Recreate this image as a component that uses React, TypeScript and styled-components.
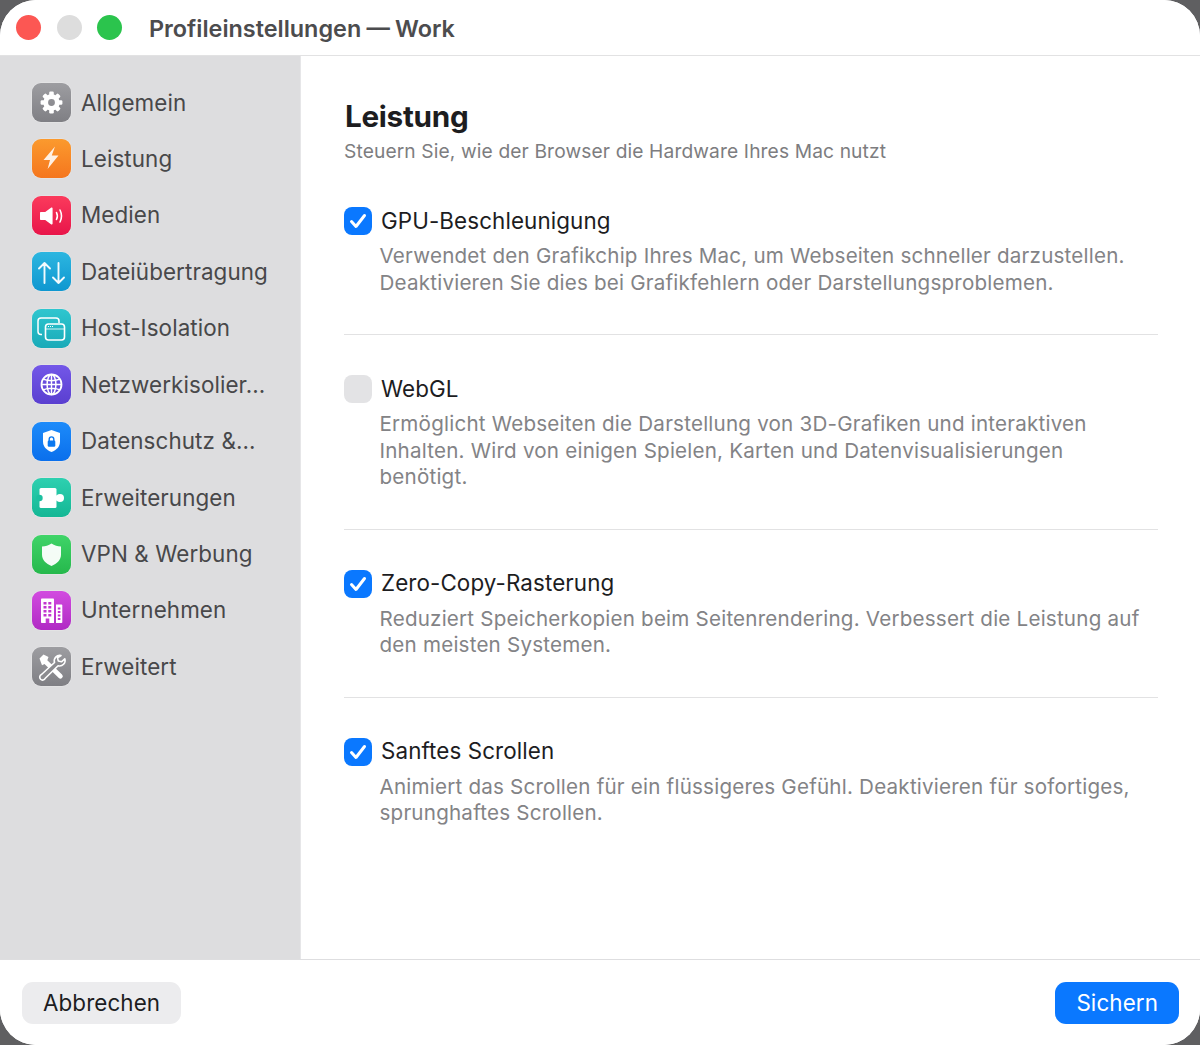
import React from 'react';
import styled, { createGlobalStyle } from 'styled-components';

const Global = createGlobalStyle`
  html, body { margin: 0; padding: 0; background: #5f5f61; }
  * { box-sizing: border-box; }
  body { font-family: Inter, "Noto Sans", "Liberation Sans", sans-serif; -webkit-font-smoothing: antialiased; }
`;

const Win = styled.div`
  width: 1200px; height: 1045px; background: #fff; border-radius: 36px; overflow: hidden;
  display: flex; flex-direction: column;
`;
const TitleBar = styled.header`
  height: 56px; flex: none; display: flex; align-items: center; padding: 0 0 0 16px;
  border-bottom: 1px solid #e2e2e3; background: #fff;
`;
const Lights = styled.div`display: flex; gap: 15.5px; margin-right: 27px;`;
const Light = styled.span<{ $c: string }>`
  width: 25px; height: 25px; border-radius: 50%; background: ${p => p.$c};
`;
const Title = styled.h1`
  margin: 2px 0 0; font-size: 23.4px; font-weight: 600; color: #4c4c4e; word-spacing: -.7px;
`;
const Body = styled.div`flex: 1; min-height: 0; display: flex;`;
const Sidebar = styled.nav`
  width: 301px; flex: none; background: #dddddf; padding: 27px 0 0 32px;
  display: flex; flex-direction: column; gap: 17.45px; border-right: 1px solid #e6e6e8;
`;
const NavItem = styled.div`display: flex; align-items: center; gap: 10px; height: 39px;`;
const IconTile = styled.div<{ $from: string; $to: string }>`
  width: 39px; height: 39px; flex: none; border-radius: 9px;
  background: linear-gradient(180deg, ${p => p.$from}, ${p => p.$to});
  display: flex; align-items: center; justify-content: center;
  box-shadow: 0 0 0 0.5px rgba(255,255,255,.35);
  svg { display: block; }
`;
const NavLabel = styled.span`
  font-size: 22.4px; color: #48484a; white-space: nowrap; letter-spacing: .1px; padding-bottom: 1px;
`;
const Main = styled.main`flex: 1; min-width: 0; padding: 41px 42px 0 43px; background: #fff;`;
const Heading = styled.h2`
  margin: 0 0 0 1px; font-size: 29.7px; line-height: 38px; font-weight: 700; color: #1d1d1f; letter-spacing: -.3px;
`;
const Sub = styled.p`
  margin: 3px 0 0; font-size: 19.2px; line-height: 26px; color: #7d7d80; letter-spacing: .12px;
`;
const Section = styled.section<{ $last?: boolean }>`
  padding-bottom: 38px;
  margin-bottom: 40px;
  border-bottom: ${p => (p.$last ? 'none' : '1px solid #e2e2e3')};
`;
const Sections = styled.div`margin-top: 43px;`;
const LabelRow = styled.label`display: flex; align-items: center; gap: 9px; height: 28px;`;
const Check = styled.span<{ $on: boolean }>`
  width: 28px; height: 28px; border-radius: 8px; flex: none;
  background: ${p => (p.$on ? '#0a78ff' : '#e3e3e5')};
  display: flex; align-items: center; justify-content: center;
`;
const Label = styled.span`font-size: 22.4px; color: #1d1d1f; letter-spacing: .1px; padding-bottom: 2px;`;
const Desc = styled.p`
  margin: 8px 8px 0 35.5px; font-size: 20.6px; line-height: 26.5px; color: #838386; letter-spacing: .21px;
`;
const Footer = styled.footer`
  height: 86px; flex: none; border-top: 1px solid #dedee0; background: #fff;
  display: flex; align-items: center; justify-content: space-between; padding: 0 21px 0 22px;
`;
const Button = styled.button<{ $primary?: boolean }>`
  height: 42px; border: none; border-radius: 11px; padding: 0 21px; font: inherit;
  font-size: 22.4px; letter-spacing: .1px;
  background: ${p => (p.$primary ? '#0a78ff' : '#ececee')};
  color: ${p => (p.$primary ? '#fff' : '#1d1d1f')};
`;

const S = ({ children }: { children: React.ReactNode }) => (
  <svg width="39" height="39" viewBox="0 0 39 39" fill="none">{children}</svg>
);

const gearTeeth = Array.from({ length: 8 }, (_, i) => i * 45);
const GearIcon = () => (
  <S>
    {gearTeeth.map(a => (
      <rect key={a} x="17.2" y="8.6" width="4.6" height="6" rx="1.2" fill="#fff" transform={`rotate(${a} 19.5 19.5)`} />
    ))}
    <circle cx="19.5" cy="19.5" r="5.8" stroke="#fff" strokeWidth="4.8" />
  </S>
);
const BoltIcon = () => (
  <S><path d="M23 7.500 11.500 21h6.500l-2.400 9L26.500 16.500h-6.700z" fill="#fff" opacity=".88" /></S>
);
const SpeakerIcon = () => (
  <S>
    <path d="M9 16h4.200l5.800-4.200c.7-.5 1.600 0 1.600.8v14.800c0 .8-.9 1.300-1.600.8L13.200 24H9c-.6 0-1-.4-1-1v-6c0-.6.4-1 1-1z" fill="#fff" />
    <path d="M24.500 16.500c1 2 1 5 0 7M28 14c1.800 3.600 1.800 8.400 0 12" stroke="#fff" strokeWidth="1.600" strokeLinecap="round" />
  </S>
);
const ArrowsIcon = () => (
  <S>
    <path d="M12.500 31V11M7 16.500 12.500 11 18 16.500M26.500 11v20M21 25.500l5.500 5.500 5.500-5.500" stroke="#fff" strokeWidth="1.900" strokeLinecap="round" strokeLinejoin="round" opacity=".95" />
  </S>
);
const WindowsIcon = () => (
  <S>
    <path d="M10 25.500H9a3 3 0 0 1-3-3V12a3 3 0 0 1 3-3h15a3 3 0 0 1 3 3v2" stroke="#fff" strokeWidth="1.500" />
    <rect x="13.500" y="15" width="19" height="16" rx="3" stroke="#fff" strokeWidth="1.600" />
    <path d="M14 20h18" stroke="#fff" strokeWidth="1" opacity=".8" />
    <path d="M16 17.500h5" stroke="#fff" strokeWidth="1.200" strokeDasharray="1 1" />
  </S>
);
const GlobeIcon = () => (
  <S>
    <circle cx="19.500" cy="19.500" r="10" stroke="#fff" strokeWidth="1.800" />
    <ellipse cx="19.500" cy="19.500" rx="4.400" ry="10" stroke="#fff" strokeWidth="1.500" />
    <path d="M9.500 19.500h20M11 14.200c5 1.800 12 1.800 17 0M11 24.800c5-1.800 12-1.800 17 0M19.500 9.500v20" stroke="#fff" strokeWidth="1.400" />
  </S>
);
const ShieldLockIcon = () => (
  <S>
    <path d="M19.500 8 28 11v8.500c0 5-3.300 8.500-8.500 10.500-5.200-2-8.500-5.500-8.500-10.500V11z" fill="#fff" />
    <rect x="15.700" y="18.500" width="7.600" height="6.300" rx="1.300" fill="#0a78f0" />
    <path d="M17.200 19v-1.800a2.300 2.300 0 0 1 4.600 0V19" stroke="#0a78f0" strokeWidth="1.400" />
  </S>
);
const PuzzleIcon = () => (
  <S>
    <rect x="7.500" y="10" width="17" height="20" rx="1.500" fill="#fff" />
    <rect x="23" y="17.500" width="4" height="5" fill="#fff" />
    <circle cx="28" cy="20" r="4" fill="#fff" />
    <circle cx="7.500" cy="20" r="3.200" fill="#1cc0a0" />
  </S>
);
const ShieldIcon = () => (
  <S><path d="M19.500 8.500c3 2 6 3 9.500 3v8c0 5.500-4 9-9.500 11.500C14 28.500 10 25 10 19.500v-8c3.500 0 6.500-1 9.500-3z" fill="#fff" opacity=".95" /></S>
);
const BuildingIcon = () => (
  <S>
    <path d="M9.800 7.500h11.400a.8.800 0 0 1 .8.800V32H9.800a.8.800 0 0 1-.8-.8V8.300a.8.800 0 0 1 .8-.8z" fill="#fff" />
    <path d="M24 13.500h5.500a.8.800 0 0 1 .8.800V31.200a.8.800 0 0 1-.8.800H24z" fill="#fff" />
    {[11, 15, 19, 23].flatMap(y =>
      [11.500, 16.300].map(x => <rect key={`${x}-${y}`} x={x} y={y} width="3" height="2.500" fill="#c236d0" />)
    )}
    {[16.500, 20, 23.500, 27].map(y => <rect key={y} x="25.800" y={y} width="2.600" height="2" fill="#c236d0" />)}
    <rect x="13.700" y="27.500" width="3.600" height="4.500" fill="#c236d0" />
  </S>
);
const ToolsIcon = () => (
  <S>
    <g strokeLinejoin="round" strokeLinecap="round">
      <path d="M7.500 11.500 11.500 7.500l5 2.500-1.200 3.300L30 27.500a2.300 2.300 0 0 1-3.200 3.500L12.500 17l-2.500 1.200z" fill="#fff" />
      <path d="M29 8.500a5.500 5.500 0 0 0-6.500 7L9.500 27.500a2.900 2.900 0 1 0 3.800 3.800l12.800-12.500a5.500 5.500 0 0 0 6.700-7l-3.300 3-3.200-.8-.8-3.100z" fill="#8c8c90" stroke="#fff" strokeWidth="1.600" />
    </g>
  </S>
);

const CheckMark = () => (
  <svg width="20" height="20" viewBox="0 0 20 20" fill="none">
    <path d="M3.500 10.500 8 15.500 16.500 4.500" stroke="#fff" strokeWidth="3" strokeLinecap="round" strokeLinejoin="round" />
  </svg>
);

const nav = [
  { label: 'Allgemein', from: '#9d9da1', to: '#7f7f84', icon: <GearIcon /> },
  { label: 'Leistung', from: '#fb9a2e', to: '#f5761e', icon: <BoltIcon /> },
  { label: 'Medien', from: '#fb3a5c', to: '#e8154a', icon: <SpeakerIcon /> },
  { label: 'Dateiübertragung', from: '#2cb6e0', to: '#0f97d0', icon: <ArrowsIcon /> },
  { label: 'Host-Isolation', from: '#2fc6cf', to: '#19aab8', icon: <WindowsIcon /> },
  { label: 'Netzwerkisolier...', from: '#7357e8', to: '#5a3fd0', icon: <GlobeIcon /> },
  { label: 'Datenschutz &...', from: '#1d8bfa', to: '#0a6fec', icon: <ShieldLockIcon /> },
  { label: 'Erweiterungen', from: '#2ed0b0', to: '#14b795', icon: <PuzzleIcon /> },
  { label: 'VPN & Werbung', from: '#3fd468', to: '#26b84c', icon: <ShieldIcon /> },
  { label: 'Unternehmen', from: '#d24be0', to: '#b02ac4', icon: <BuildingIcon /> },
  { label: 'Erweitert', from: '#9d9da1', to: '#7f7f84', icon: <ToolsIcon /> },
];

const options = [
  { label: 'GPU-Beschleunigung', on: true, desc: 'Verwendet den Grafikchip Ihres Mac, um Webseiten schneller darzustellen. Deaktivieren Sie dies bei Grafikfehlern oder Darstellungsproblemen.' },
  { label: 'WebGL', on: false, desc: 'Ermöglicht Webseiten die Darstellung von 3D-Grafiken und interaktiven Inhalten. Wird von einigen Spielen, Karten und Datenvisualisierungen benötigt.' },
  { label: 'Zero-Copy-Rasterung', on: true, desc: 'Reduziert Speicherkopien beim Seitenrendering. Verbessert die Leistung auf den meisten Systemen.' },
  { label: 'Sanftes Scrollen', on: true, desc: 'Animiert das Scrollen für ein flüssigeres Gefühl. Deaktivieren für sofortiges, sprunghaftes Scrollen.' },
];

export default function App() {
  return (
    <Win>
      <Global />
      <TitleBar>
        <Lights>
          <Light $c="#fc5753" />
          <Light $c="#dddddd" />
          <Light $c="#2bc44d" />
        </Lights>
        <Title>Profileinstellungen — Work</Title>
      </TitleBar>
      <Body>
        <Sidebar>
          {nav.map(n => (
            <NavItem key={n.label}>
              <IconTile $from={n.from} $to={n.to}>{n.icon}</IconTile>
              <NavLabel>{n.label}</NavLabel>
            </NavItem>
          ))}
        </Sidebar>
        <Main>
          <Heading>Leistung</Heading>
          <Sub>Steuern Sie, wie der Browser die Hardware Ihres Mac nutzt</Sub>
          <Sections>
            {options.map((o, i) => (
              <Section key={o.label} $last={i === options.length - 1}>
                <LabelRow>
                  <Check $on={o.on}>{o.on && <CheckMark />}</Check>
                  <Label>{o.label}</Label>
                </LabelRow>
                <Desc>{o.desc}</Desc>
              </Section>
            ))}
          </Sections>
        </Main>
      </Body>
      <Footer>
        <Button>Abbrechen</Button>
        <Button $primary>Sichern</Button>
      </Footer>
    </Win>
  );
}
